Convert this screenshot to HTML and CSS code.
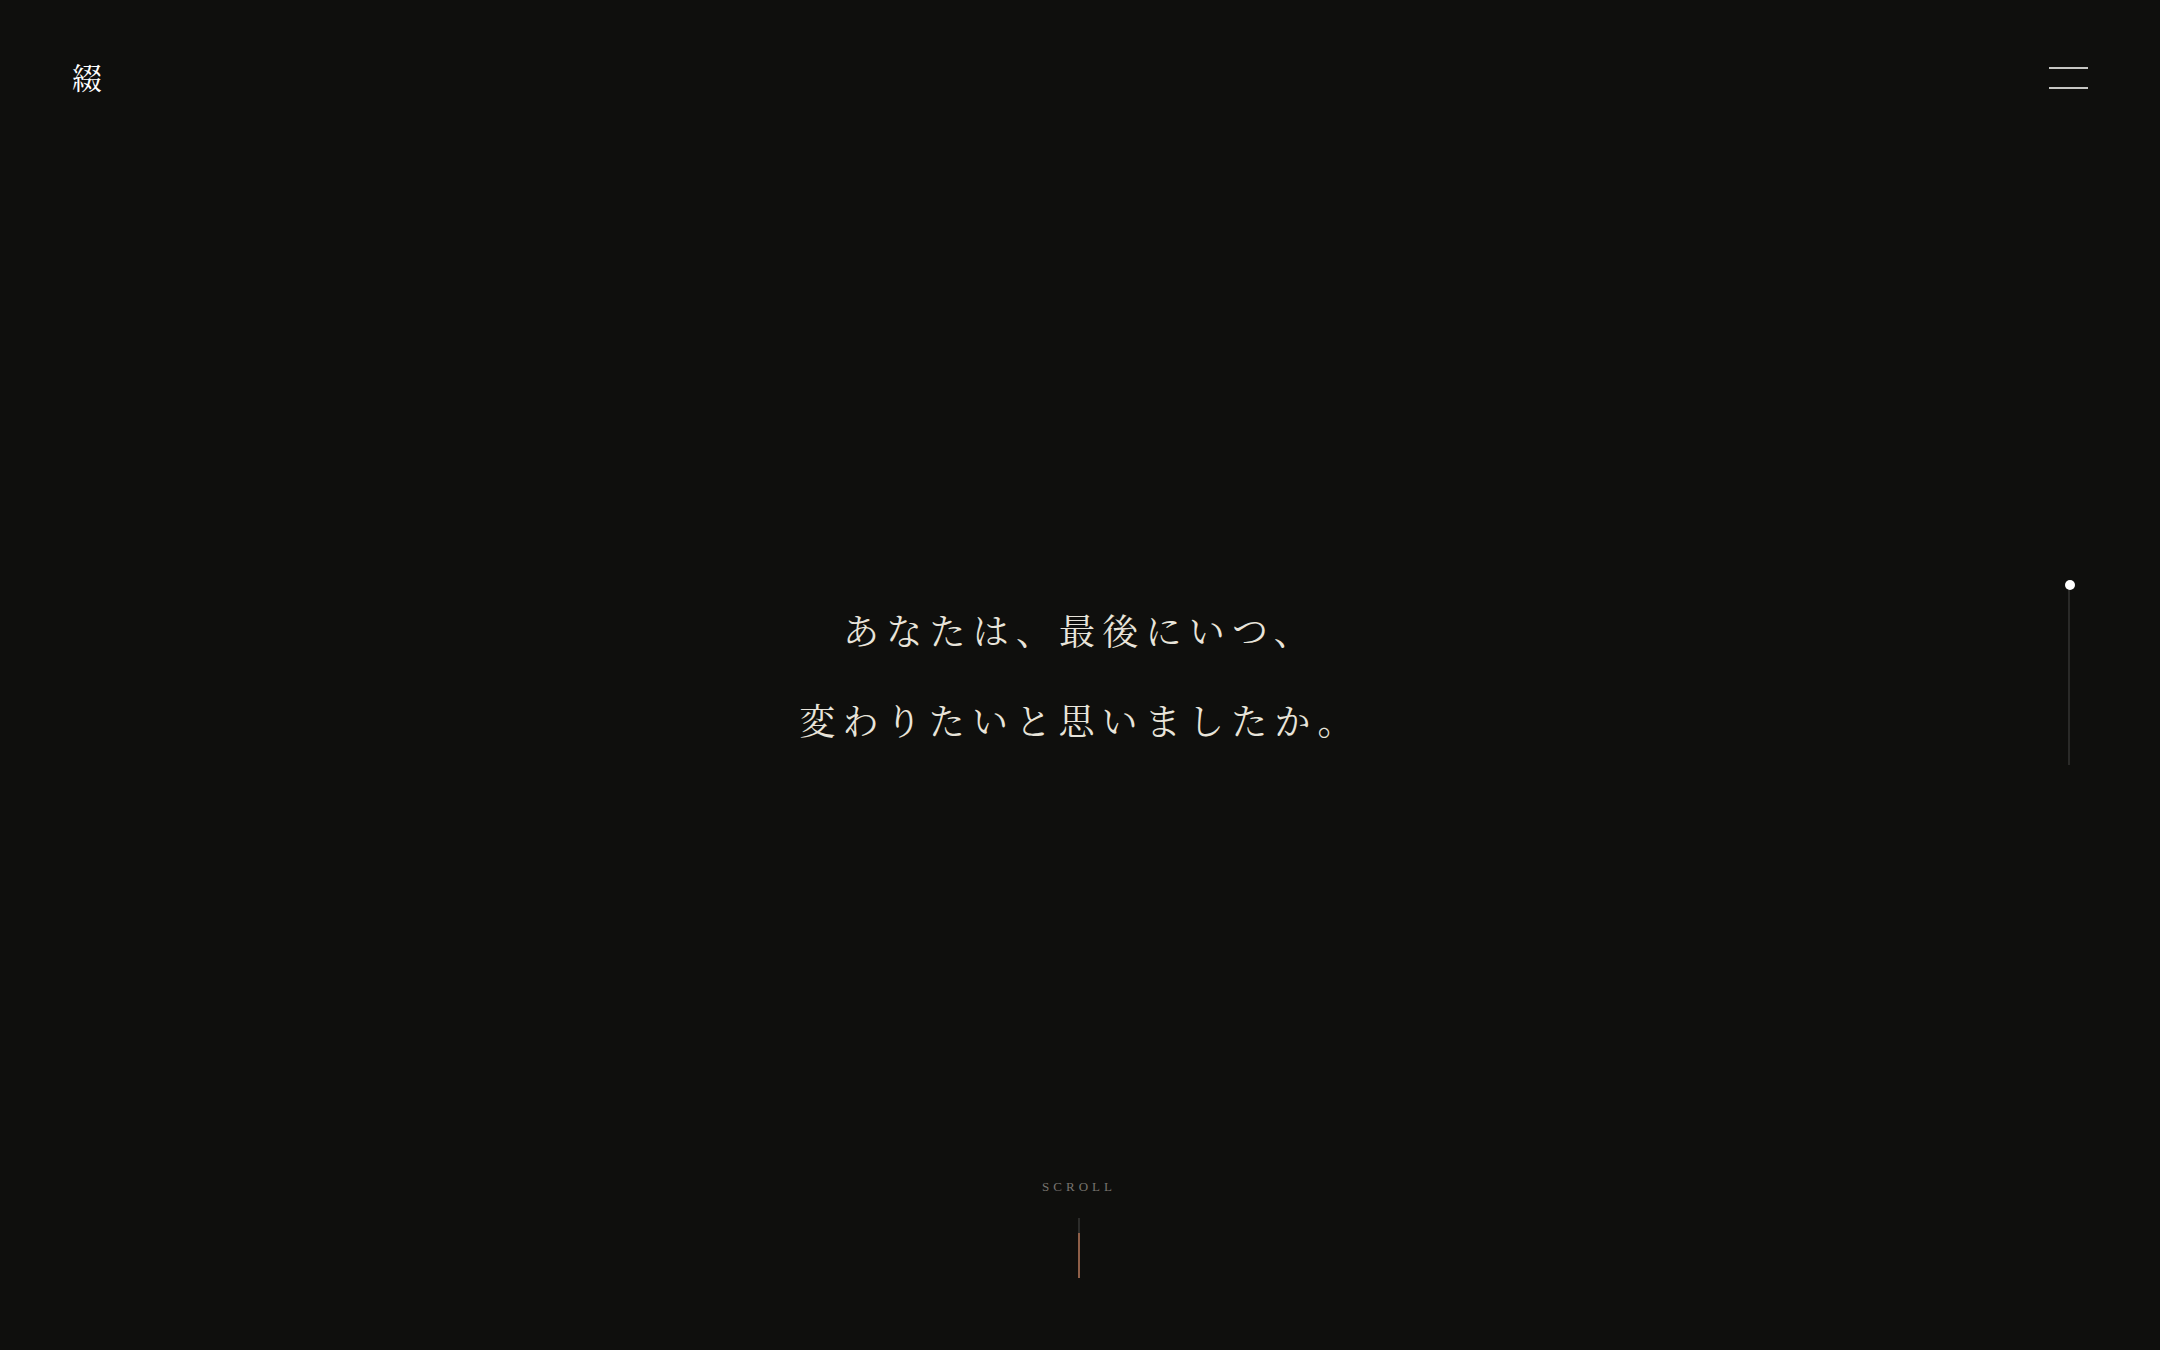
FILE: index.html
```html
<!DOCTYPE html>
<html lang="ja">
<head>
<meta charset="utf-8">
<meta name="viewport" content="width=device-width, initial-scale=1">
<title>綴</title>
<link rel="stylesheet" href="styles.css">
</head>
<body>
<div class="page">
  <header class="header">
    <a class="logo" href="#">綴</a>
    <button class="menu" type="button" aria-label="メニュー"><span class="menu-line"></span><span class="menu-line"></span></button>
  </header>
  <main class="hero">
    <h1 class="question">あなたは、最後にいつ、<br>変わりたいと思いましたか。</h1>
    <div class="progress"><span class="progress-dot"></span></div>
  </main>
  <footer class="footer">
    <a class="scroll" href="#">SCROLL<span class="scroll-line"></span></a>
  </footer>
</div>
</body>
</html>
```

FILE: styles.css
```css
* { box-sizing: border-box; }
body {
  margin: 0;
  background: #0f0f0d;
  color: #e8e4da;
  font-family: "Liberation Serif", "Noto Serif CJK JP", "Noto Sans CJK JP", serif;
}
.page {
  min-height: 100vh;
  display: grid;
  grid-template-rows: 1fr auto 1fr;
}
.header {
  display: flex;
  justify-content: space-between;
  align-items: flex-start;
  padding: 57px 72px 0;
}
.logo {
  color: #fff;
  font-size: 30px;
  line-height: 44px;
  text-decoration: none;
}
.menu {
  width: 39px;
  display: grid;
  gap: 18px;
  padding: 10px 0;
  border: 0;
  background: none;
  cursor: pointer;
}
.menu-line { height: 2px; background: #c6c6c3; }
.hero {
  display: grid;
  grid-template-columns: 1fr auto 1fr;
  align-items: center;
  padding: 0 90px;
}
.question {
  grid-column: 2;
  margin: 0;
  padding-top: 6px;
  font-size: 36px;
  font-weight: 400;
  line-height: 90px;
  letter-spacing: 0.2em;
  text-align: center;
}
.progress {
  position: relative;
  justify-self: end;
  width: 2px;
  height: 180px;
  background: #2a2a28;
}
.progress-dot {
  position: absolute;
  top: -5px;
  left: -3px;
  width: 10px;
  height: 10px;
  border-radius: 50%;
  background: #fff;
}
.footer {
  display: flex;
  justify-content: center;
  align-items: flex-end;
  padding: 0 2px 72px 0;
}
.scroll {
  display: flex;
  flex-direction: column;
  align-items: center;
  gap: 20px;
  color: #77746f;
  font-size: 13px;
  line-height: 22px;
  letter-spacing: 4px;
  text-decoration: none;
}
.scroll-line {
  width: 2px;
  height: 60px;
  background: linear-gradient(#2c2c2a 15px, #8e5f48 15px);
}
```
